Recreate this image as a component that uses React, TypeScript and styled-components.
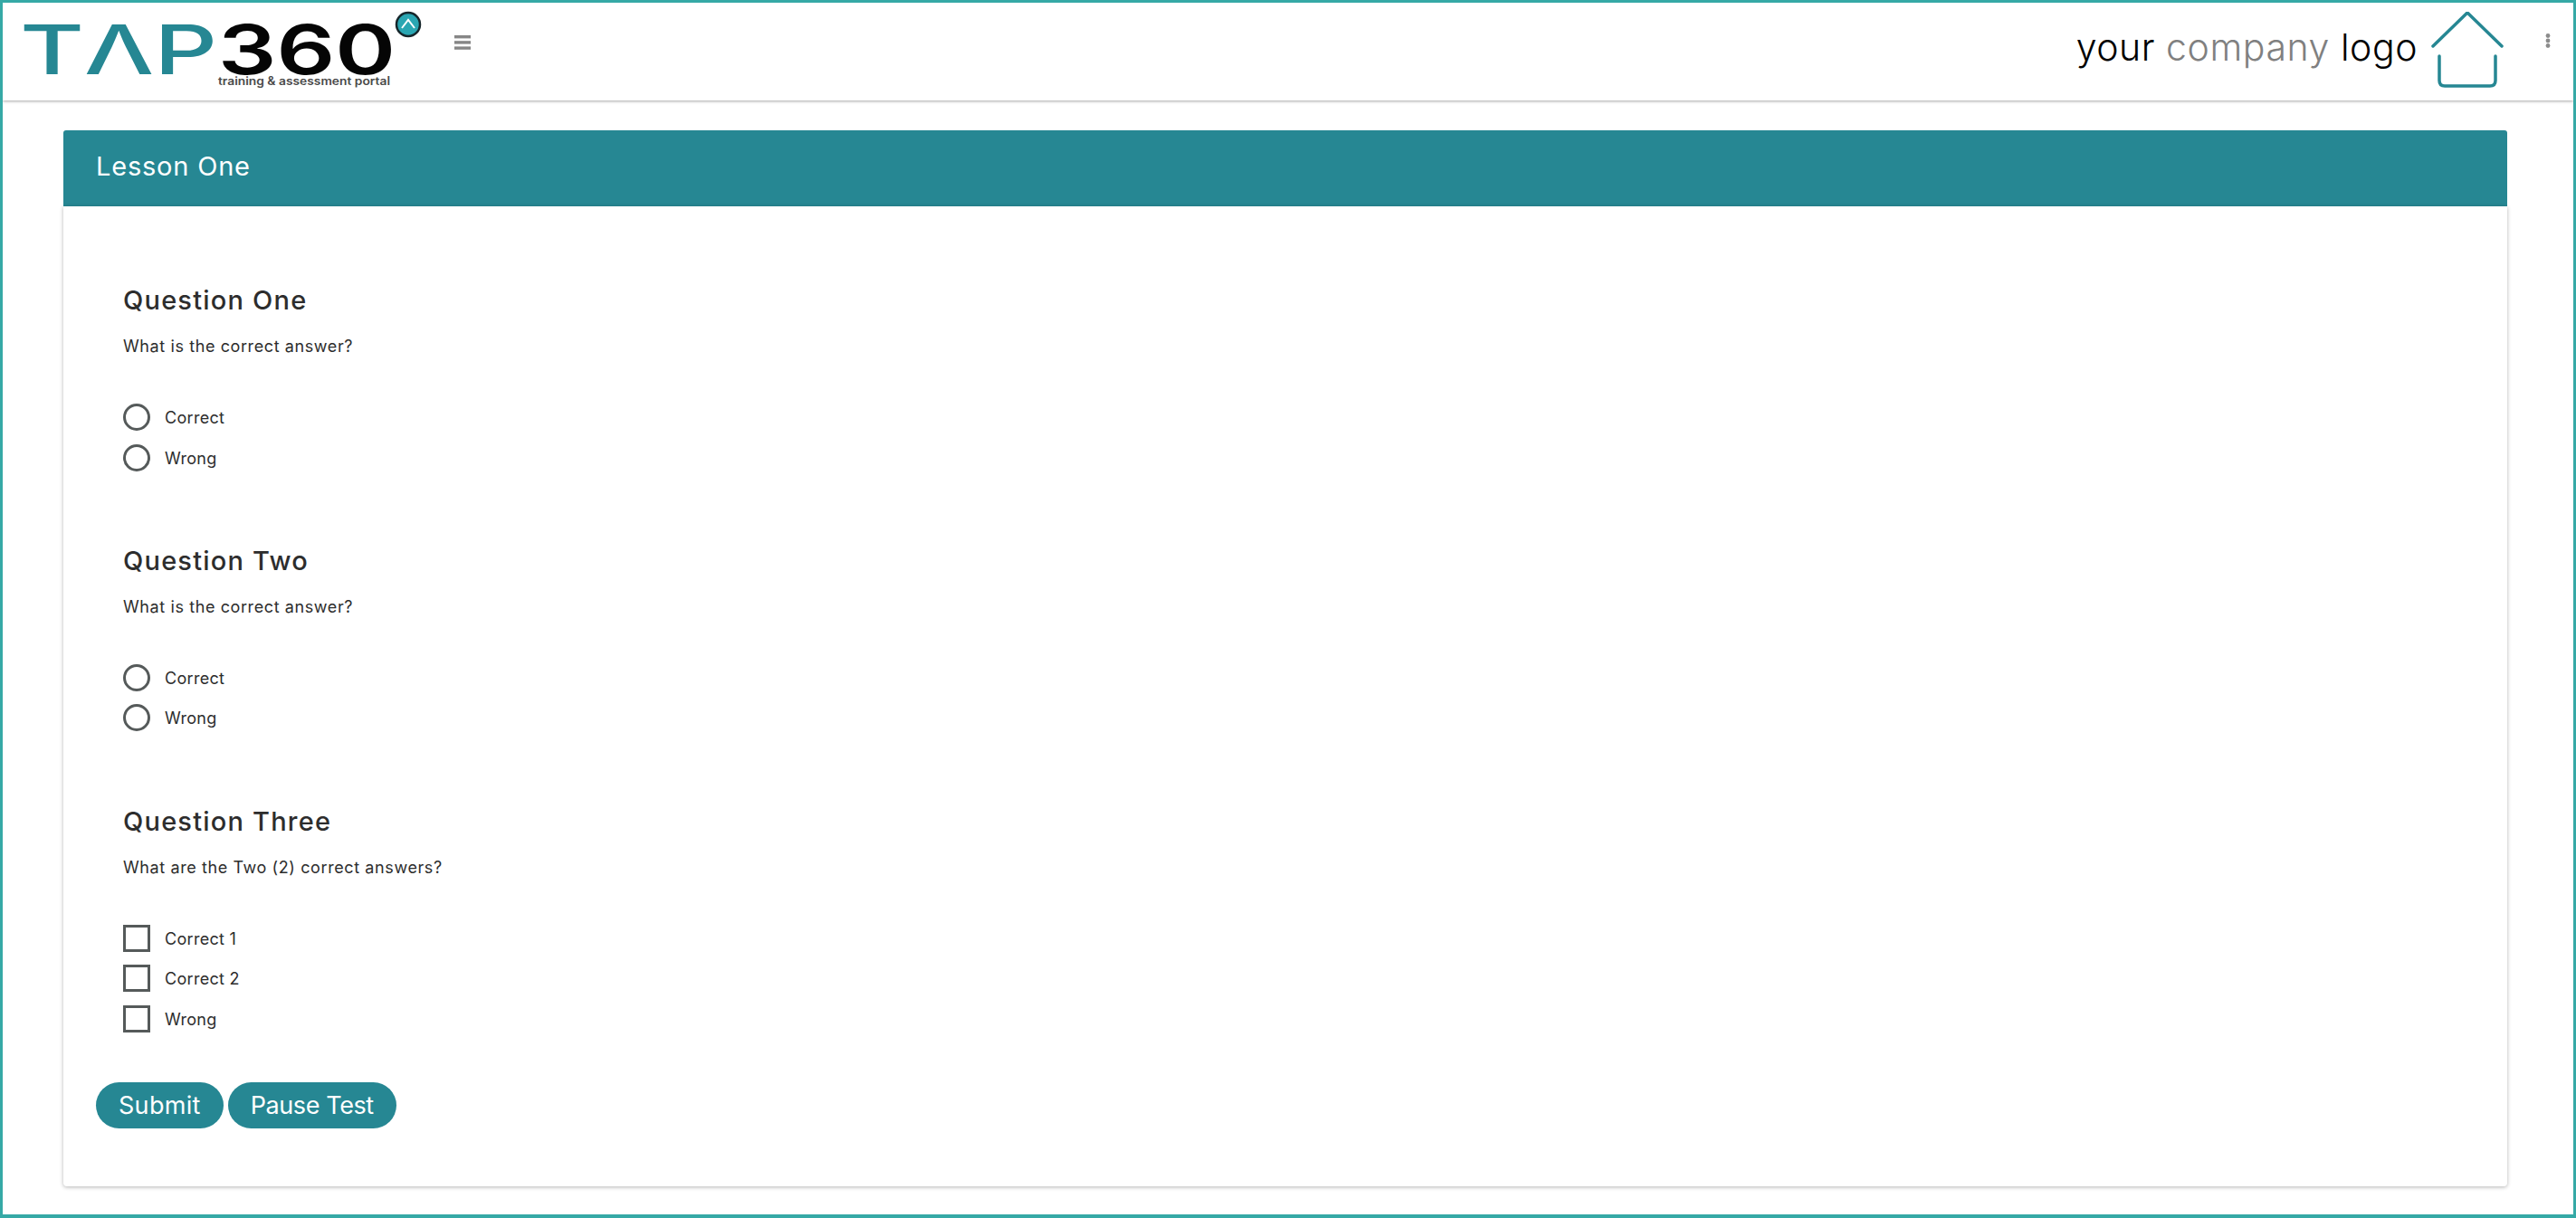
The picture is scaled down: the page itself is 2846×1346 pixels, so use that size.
import React from "react";
import styled, { createGlobalStyle } from "styled-components";

const TEAL = "#268793";
const BORDER = "#36a9a6";
const TEXT = "#2d2d2d";
const FONT = `Inter, "Noto Sans", "Liberation Sans", sans-serif`;

const GlobalStyle = createGlobalStyle`
  html, body {
    margin: 0;
    padding: 0;
    background: #fff;
  }
  body {
    font-family: ${FONT};
    color: ${TEXT};
  }
`;

const QUESTIONS = [
  {
    title: "Question One",
    text: "What is the correct answer?",
    type: "radio",
    options: ["Correct", "Wrong"],
  },
  {
    title: "Question Two",
    text: "What is the correct answer?",
    type: "radio",
    options: ["Correct", "Wrong"],
  },
  {
    title: "Question Three",
    text: "What are the Two (2) correct answers?",
    type: "check",
    options: ["Correct 1", "Correct 2", "Wrong"],
  },
];

const Logo = () => (
  <LogoSvg viewBox="0 0 470 108">
    <text
      x="19"
      y="79"
      fontFamily="Inter, sans-serif"
      fontSize="76"
      fontWeight="500"
      fill={TEAL}
      textLength="218"
      lengthAdjust="spacingAndGlyphs"
    >
      TΛP
    </text>
    <text
      x="238"
      y="79"
      fontFamily="Inter, sans-serif"
      fontSize="76"
      fontWeight="600"
      fill="#050505"
      textLength="196"
      lengthAdjust="spacingAndGlyphs"
    >
      360
    </text>
    <text
      x="238"
      y="91"
      fontFamily="Inter, sans-serif"
      fontSize="12.5"
      fontWeight="600"
      fill="#4a4a4a"
      textLength="190"
      lengthAdjust="spacingAndGlyphs"
    >
      training &amp; assessment portal
    </text>
    <circle cx="448" cy="24" r="13" fill="#2aa6b2" stroke="#16262b" strokeWidth="2.5" />
    <path d="M441 28 L448 19 L455 28" fill="none" stroke="#fff" strokeWidth="2" />
  </LogoSvg>
);

const House = () => (
  <HouseSvg viewBox="0 0 80 90" fill="none" stroke={TEAL} strokeWidth="3.5" strokeLinecap="round">
    <path d="M2 38 L40 1 L78 38" />
    <path d="M9 49 V76 Q9 82 15 82 H65 Q71 82 71 76 V49" />
  </HouseSvg>
);

const MenuIcon = () => (
  <MenuSvg viewBox="0 0 18 16" fill="#868686">
    <rect x="0" y="0" width="18" height="3.4" />
    <rect x="0" y="6.2" width="18" height="3.4" />
    <rect x="0" y="12.4" width="18" height="3.4" />
  </MenuSvg>
);

const Kebab = () => (
  <KebabSvg viewBox="0 0 6 16" fill="#8c8c8c">
    <circle cx="3" cy="2.5" r="2.4" />
    <circle cx="3" cy="8" r="2.4" />
    <circle cx="3" cy="13.5" r="2.4" />
  </KebabSvg>
);

export default function App() {
  return (
    <>
      <GlobalStyle />
      <Frame>
        <Header>
          <HeaderLeft>
            <Logo />
            <MenuIcon />
          </HeaderLeft>
          <HeaderRight>
            <CompanyText>
              your <Light>company</Light> logo
            </CompanyText>
            <House />
            <Kebab />
          </HeaderRight>
        </Header>
        <Main>
          <TitleBar>Lesson One</TitleBar>
          <Card>
            {QUESTIONS.map((q) => (
              <Question key={q.title}>
                <QuestionTitle>{q.title}</QuestionTitle>
                <QuestionText>{q.text}</QuestionText>
                <Options>
                  {q.options.map((o) => (
                    <Option key={o}>
                      <Mark $round={q.type === "radio"} />
                      <OptionLabel>{o}</OptionLabel>
                    </Option>
                  ))}
                </Options>
              </Question>
            ))}
            <Actions>
              <PillButton>Submit</PillButton>
              <PillButton $tight>Pause Test</PillButton>
            </Actions>
          </Card>
        </Main>
      </Frame>
    </>
  );
}

const Frame = styled.div`
  box-sizing: border-box;
  width: 2846px;
  height: 1346px;
  border: 3px solid ${BORDER};
  border-bottom-width: 4px;
  overflow: hidden;
  background: #fff;
`;
const Header = styled.header`
  display: flex;
  justify-content: space-between;
  align-items: flex-start;
  height: 108px;
  box-shadow: 0 1px 3px rgba(0, 0, 0, 0.35);
`;
const HeaderLeft = styled.div`
  display: flex;
  align-items: flex-start;
`;
const HeaderRight = styled.div`
  display: flex;
  align-items: flex-start;
`;
const LogoSvg = styled.svg`
  width: 470px;
  height: 108px;
  display: block;
`;
const MenuSvg = styled.svg`
  width: 18px;
  height: 16px;
  margin: 36px 0 0 29px;
`;
const CompanyText = styled.div`
  font-size: 41px;
  line-height: 50px;
  font-weight: 350;
  color: #000;
  margin-top: 24px;
  letter-spacing: 0.55px;
`;
const Light = styled.span`
  color: #808080;
  font-weight: 300;
`;
const HouseSvg = styled.svg`
  width: 80px;
  height: 90px;
  margin: 10px 0 0 15px;
`;
const KebabSvg = styled.svg`
  width: 6px;
  height: 16px;
  margin: 34px 25px 0 46px;
`;
const Main = styled.main`
  padding: 33px 73px 0 67px;
`;
const TitleBar = styled.div`
  box-sizing: border-box;
  height: 84px;
  padding-left: 36px;
  background: ${TEAL};
  border-radius: 3px 3px 0 0;
  color: #fff;
  font-size: 29px;
  line-height: 80px;
  letter-spacing: 0.8px;
`;
const Card = styled.section`
  padding: 84px 36px 64px;
  background: #fff;
  border-radius: 0 0 4px 4px;
  box-shadow: 0 1px 4px rgba(0, 0, 0, 0.3);
`;
const Question = styled.div`
  padding-left: 30px;
  margin-bottom: 72px;
  &:nth-of-type(3) {
    margin-bottom: 0;
  }
`;
const QuestionTitle = styled.h3`
  margin: 0;
  font-size: 29px;
  line-height: 40px;
  font-weight: 500;
  letter-spacing: 1.2px;
  color: ${TEXT};
`;
const QuestionText = styled.p`
  margin: 17px 0 0;
  font-size: 18px;
  line-height: 28px;
  font-weight: 400;
  letter-spacing: 0.6px;
  color: ${TEXT};
`;
const Options = styled.div`
  display: flex;
  flex-direction: column;
  margin-top: 42px;
`;
const Option = styled.div`
  display: flex;
  align-items: center;
  height: 44.4px;
`;
const Mark = styled.span<{ $round?: boolean }>`
  box-sizing: border-box;
  width: 30px;
  height: 30px;
  border: 3px solid #555a5a;
  border-radius: ${({ $round }) => ($round ? "50%" : "0")};
`;
const OptionLabel = styled.span`
  margin: 2px 0 0 16px;
  font-size: 18px;
  line-height: 28px;
  letter-spacing: 0.3px;
  color: ${TEXT};
`;
const Actions = styled.div`
  display: flex;
  gap: 5px;
  margin-top: 48px;
`;
const PillButton = styled.button<{ $tight?: boolean }>`
  height: 51px;
  padding: 0 25px;
  border: 0;
  border-radius: 26px;
  background: ${TEAL};
  color: #fff;
  font-family: ${FONT};
  font-size: 27px;
  font-weight: 400;
  letter-spacing: ${({ $tight }) => ($tight ? "-0.4px" : "0.3px")};
`;
